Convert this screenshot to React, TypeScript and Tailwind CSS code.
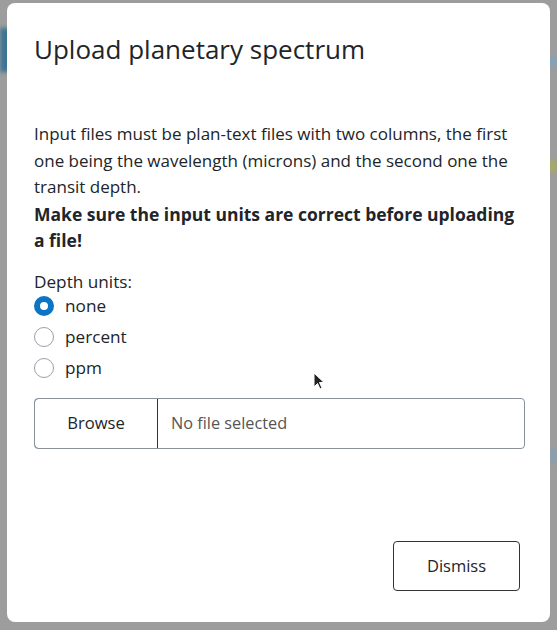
import React from "react";

function Radio({ checked, label }: { checked?: boolean; label: string }) {
  return (
    <label className="flex items-center h-[31px]">
      {checked ? (
        <span className="box-border w-[20px] h-[20px] rounded-full border-[6px] border-[#0b74c4] bg-white" />
      ) : (
        <span className="box-border w-[20px] h-[20px] rounded-full border border-[#9aa0a6] bg-white" />
      )}
      <span className="ml-[11px] text-[17.2px] text-[#212529]">{label}</span>
    </label>
  );
}

export default function App() {
  return (
    <div
      className="relative w-[557px] h-[630px] overflow-hidden bg-[#9d9d9d]"
      style={{ fontFamily: '"Open Sans", "Noto Sans", sans-serif' }}
    >
      <div className="absolute left-0 top-[28px] w-[12px] h-[44px] bg-[#3e7394] blur-[2px]" />
      <div className="absolute right-0 top-[58px] w-[10px] h-[8px] bg-[#7fa3bd] blur-[2px]" />
      <div className="absolute right-0 top-[160px] w-[10px] h-[12px] bg-[#a8a86a] blur-[2px]" />
      <div className="absolute right-0 top-[450px] w-[10px] h-[12px] bg-[#85a0b4] blur-[3px]" />

      <div className="absolute left-[7px] top-[3px] w-[543px] h-[619px] rounded-[8px] bg-white flex flex-col text-[#212529]">
        <div className="px-[27px] pt-[31px]">
          <h1 className="text-[26px] leading-[31px] font-normal text-[#212529]">
            Upload planetary spectrum
          </h1>
        </div>
        <div className="px-[27px] pt-[56px] text-[17px] leading-[26.5px]">
          <p>
            Input files must be plan-text files with two columns, the first one being the wavelength (microns) and the second one the transit depth.
          </p>
          <p className="font-bold text-[17.5px]">
            Make sure the input units are correct before uploading a file!
          </p>
          <div className="mt-[18px] leading-[19px] text-[17.2px]">Depth units:</div>
          <div className="flex flex-col">
            <Radio checked label="none" />
            <Radio label="percent" />
            <Radio label="ppm" />
          </div>
          <div className="mt-[14px] flex h-[51px] w-[491px] rounded-[4px] border border-[#8a9097] overflow-hidden">
            <div className="w-[124px] flex items-center justify-center border-r border-r-[#333] border-l border-t border-b border-[#333] -m-px rounded-l-[4px] text-[16.6px] text-[#212529]">
              Browse
            </div>
            <div className="flex items-center pl-[14px] text-[16.3px] text-[#555]">
              No file selected
            </div>
          </div>
        </div>
        <div className="mt-auto flex justify-end px-[30px] pb-[31px]">
          <button className="w-[127px] h-[50px] rounded-[4px] border border-[#333] bg-white text-[16.5px] text-[#212529]">
            Dismiss
          </button>
        </div>
      </div>

      <svg className="absolute left-[313px] top-[372px]" width="13" height="19" viewBox="0 0 13 19">
        <path d="M1 1 L1 15 L4.5 11.5 L7 17 L9 16 L6.5 10.5 L11 10.5 Z" fill="#222" stroke="#fff" strokeWidth="1" />
      </svg>
    </div>
  );
}
